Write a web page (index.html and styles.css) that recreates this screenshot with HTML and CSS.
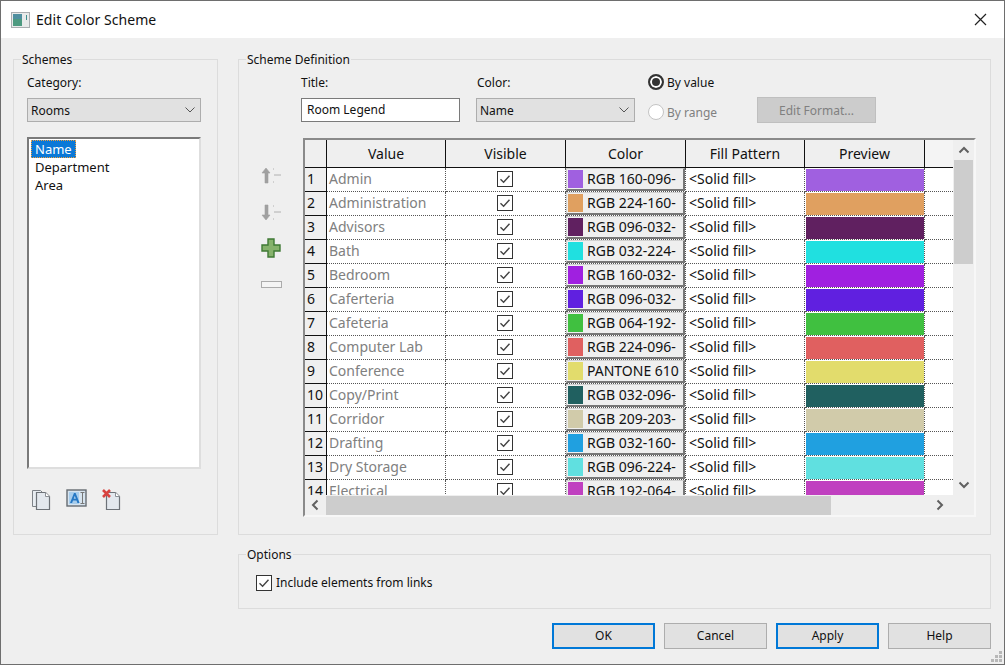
FILE: index.html
```html
<!DOCTYPE html>
<html lang="en">
<head>
<meta charset="utf-8">
<title>Edit Color Scheme</title>
<link rel="stylesheet" href="styles.css">
</head>
<body>
<svg class="defs" width="0" height="0" aria-hidden="true">
  <symbol id="check" viewBox="0 0 16 16">
    <rect x="0.5" y="0.5" width="15" height="15" fill="#fff" stroke="#333"/>
    <path d="M3.5 8.2 6.6 11.2 12.5 4.8" fill="none" stroke="#444" stroke-width="1.4"/>
  </symbol>
  <symbol id="chev" viewBox="0 0 12 12">
    <path d="M1.5 8.5 6 4 10.5 8.5" fill="none" stroke="#606060" stroke-width="2"/>
  </symbol>
</svg>
<div class="window">
  <header class="titlebar">
    <svg class="app-icon" width="19" height="16" viewBox="0 0 19 16">
      <rect x="0.5" y="0.5" width="18" height="15" fill="#e8eaea" stroke="#a9adb0"/>
      <rect x="2" y="2" width="9" height="12" fill="#4d9a80"/>
      <rect x="2" y="2" width="9" height="5" fill="#4f8fa0"/>
      <rect x="15" y="3" width="1" height="5" fill="#3f8f8f"/>
    </svg>
    <span class="title">Edit Color Scheme</span>
    <svg class="close" width="13" height="13" viewBox="0 0 13 13"><path d="M1 1 12 12M12 1 1 12" stroke="#222" stroke-width="1.2"/></svg>
  </header>
  <main class="content">
    <div class="top">
      <fieldset class="group schemes">
        <legend>Schemes</legend>
        <div class="label">Category:</div>
        <div class="combo">Rooms<svg class="combo-arrow" width="10" height="6" viewBox="0 0 10 6"><path d="M.5.5 5 5 9.5.5" fill="none" stroke="#555"/></svg></div>
        <ul class="list">
          <li class="selected"><span>Name</span></li>
          <li><span>Department</span></li>
          <li><span>Area</span></li>
        </ul>
        <div class="tools">
          <svg width="22" height="22" viewBox="0 0 22 22">
            <path d="M1.5 1.5h8l3 3v13h-11z" fill="#e8edf2" stroke="#7d8288"/>
            <path d="M5.5 3.5h9l4 4v13h-13z" fill="#e3e8ee" stroke="#6d7278" stroke-width="1.2"/>
            <path d="M14.5 3.5v4h4" fill="#fff" stroke="#8a8f95"/>
          </svg>
          <svg width="22" height="19" viewBox="0 0 22 19">
            <rect x="1" y="1" width="19" height="16" fill="#d7e4ef" stroke="#666c72" stroke-width="1.4"/>
            <rect x="3" y="3" width="10" height="12" fill="#a8cdec"/>
            <path d="M4 14 8 4h1.6l4 10h-2.2l-.9-2.5H7L6.100 14zM7.700 9.800h2.200L8.800 6.800z" fill="#2678c4"/>
            <path d="M14.500 3.500h4M16.500 3.500v11M14.500 14.500h4" fill="none" stroke="#777" stroke-width="1"/>
          </svg>
          <svg width="23" height="22" viewBox="0 0 23 22">
            <path d="M5.500 3.500h9l4 4v13h-13z" fill="#e3e8ee" stroke="#6d7278" stroke-width="1.200"/>
            <path d="M14.500 3.500v4h4" fill="#fff" stroke="#8a8f95"/>
            <path d="M2 1 9 8M9 1 2 8" stroke="#d8433f" stroke-width="2.600"/>
          </svg>
        </div>
      </fieldset>
      <fieldset class="group definition">
        <legend>Scheme Definition</legend>
        <div class="def-head">
          <div class="field field-title">
            <div class="label">Title:</div>
            <div class="input">Room Legend</div>
          </div>
          <div class="field field-color">
            <div class="label">Color:</div>
            <div class="combo">Name<svg class="combo-arrow" width="10" height="6" viewBox="0 0 10 6"><path d="M.5.5 5 5 9.500.5" fill="none" stroke="#555"/></svg></div>
          </div>
          <div class="radios">
            <div class="radio on"><i></i>By value</div>
            <div class="radio off"><i></i>By range</div>
          </div>
          <div class="btn-disabled">Edit Format...</div>
        </div>
        <div class="def-body">
          <div class="side">
            <svg class="s-up" width="22" height="17" viewBox="0 0 22 17">
              <path d="M5 1 9 6H7V16H4V6H1z" fill="#a0a0a0" stroke="#a0a0a0" stroke-width=".6"/>
              <path d="M12 2h1M12 15h1M13 8h7" stroke="#b0b0b0"/>
            </svg>
            <svg class="s-down" width="22" height="17" viewBox="0 0 22 17">
              <path d="M5 16 9 11H7V1H4V11H1z" fill="#a0a0a0" stroke="#a0a0a0" stroke-width=".6"/>
              <path d="M12 2h1M12 15h1M13 8h7" stroke="#b0b0b0"/>
            </svg>
            <svg class="s-plus" width="20" height="20" viewBox="0 0 20 20">
              <path d="M7 1h6v6h6v6h-6v6H7v-6H1V7h6z" fill="#86b26c" stroke="#3f7a34" stroke-width="1.400"/>
            </svg>
            <svg class="s-minus" width="21" height="7" viewBox="0 0 21 7"><rect x=".5" y=".5" width="20" height="6" fill="#f4f4f4" stroke="#ababab"/></svg>
          </div>
          <div class="grid">
            <div class="grid-view">
              <table>
                <colgroup>
                  <col class="c-num"><col class="c-val"><col class="c-vis"><col class="c-col"><col class="c-pat"><col class="c-pre"><col class="c-end">
                </colgroup>
                <thead>
                  <tr><th></th><th>Value</th><th>Visible</th><th>Color</th><th>Fill Pattern</th><th>Preview</th><th class="blank"></th></tr>
                </thead>
                <tbody>
                  <tr><th>1</th><td class="val">Admin</td><td class="vis"><svg><use href="#check"/></svg></td><td class="col"><div class="cbtn"><i class="f1"></i>RGB 160-096-</div></td><td class="pat">&lt;Solid fill&gt;</td><td class="pre"><div class="f1"></div></td><td class="end"></td></tr>
                  <tr><th>2</th><td class="val">Administration</td><td class="vis"><svg><use href="#check"/></svg></td><td class="col"><div class="cbtn"><i class="f2"></i>RGB 224-160-</div></td><td class="pat">&lt;Solid fill&gt;</td><td class="pre"><div class="f2"></div></td><td class="end"></td></tr>
                  <tr><th>3</th><td class="val">Advisors</td><td class="vis"><svg><use href="#check"/></svg></td><td class="col"><div class="cbtn"><i class="f3"></i>RGB 096-032-</div></td><td class="pat">&lt;Solid fill&gt;</td><td class="pre"><div class="f3"></div></td><td class="end"></td></tr>
                  <tr><th>4</th><td class="val">Bath</td><td class="vis"><svg><use href="#check"/></svg></td><td class="col"><div class="cbtn"><i class="f4"></i>RGB 032-224-</div></td><td class="pat">&lt;Solid fill&gt;</td><td class="pre"><div class="f4"></div></td><td class="end"></td></tr>
                  <tr><th>5</th><td class="val">Bedroom</td><td class="vis"><svg><use href="#check"/></svg></td><td class="col"><div class="cbtn"><i class="f5"></i>RGB 160-032-</div></td><td class="pat">&lt;Solid fill&gt;</td><td class="pre"><div class="f5"></div></td><td class="end"></td></tr>
                  <tr><th>6</th><td class="val">Caferteria</td><td class="vis"><svg><use href="#check"/></svg></td><td class="col"><div class="cbtn"><i class="f6"></i>RGB 096-032-</div></td><td class="pat">&lt;Solid fill&gt;</td><td class="pre"><div class="f6"></div></td><td class="end"></td></tr>
                  <tr><th>7</th><td class="val">Cafeteria</td><td class="vis"><svg><use href="#check"/></svg></td><td class="col"><div class="cbtn"><i class="f7"></i>RGB 064-192-</div></td><td class="pat">&lt;Solid fill&gt;</td><td class="pre"><div class="f7"></div></td><td class="end"></td></tr>
                  <tr><th>8</th><td class="val">Computer Lab</td><td class="vis"><svg><use href="#check"/></svg></td><td class="col"><div class="cbtn"><i class="f8"></i>RGB 224-096-</div></td><td class="pat">&lt;Solid fill&gt;</td><td class="pre"><div class="f8"></div></td><td class="end"></td></tr>
                  <tr><th>9</th><td class="val">Conference</td><td class="vis"><svg><use href="#check"/></svg></td><td class="col"><div class="cbtn"><i class="f9"></i>PANTONE 610</div></td><td class="pat">&lt;Solid fill&gt;</td><td class="pre"><div class="f9"></div></td><td class="end"></td></tr>
                  <tr><th>10</th><td class="val">Copy/Print</td><td class="vis"><svg><use href="#check"/></svg></td><td class="col"><div class="cbtn"><i class="f10"></i>RGB 032-096-</div></td><td class="pat">&lt;Solid fill&gt;</td><td class="pre"><div class="f10"></div></td><td class="end"></td></tr>
                  <tr><th>11</th><td class="val">Corridor</td><td class="vis"><svg><use href="#check"/></svg></td><td class="col"><div class="cbtn"><i class="f11"></i>RGB 209-203-</div></td><td class="pat">&lt;Solid fill&gt;</td><td class="pre"><div class="f11"></div></td><td class="end"></td></tr>
                  <tr><th>12</th><td class="val">Drafting</td><td class="vis"><svg><use href="#check"/></svg></td><td class="col"><div class="cbtn"><i class="f12"></i>RGB 032-160-</div></td><td class="pat">&lt;Solid fill&gt;</td><td class="pre"><div class="f12"></div></td><td class="end"></td></tr>
                  <tr><th>13</th><td class="val">Dry Storage</td><td class="vis"><svg><use href="#check"/></svg></td><td class="col"><div class="cbtn"><i class="f13"></i>RGB 096-224-</div></td><td class="pat">&lt;Solid fill&gt;</td><td class="pre"><div class="f13"></div></td><td class="end"></td></tr>
                  <tr><th>14</th><td class="val">Electrical</td><td class="vis"><svg><use href="#check"/></svg></td><td class="col"><div class="cbtn"><i class="f14"></i>RGB 192-064-</div></td><td class="pat">&lt;Solid fill&gt;</td><td class="pre"><div class="f14"></div></td><td class="end"></td></tr>
                </tbody>
              </table>
            </div>
            <div class="vbar">
              <svg class="arrow" width="12" height="12"><use href="#chev"/></svg>
              <div class="vtrack"><div class="vthumb"></div></div>
              <svg class="arrow flip" width="12" height="12"><use href="#chev"/></svg>
            </div>
            <div class="hbar">
              <svg class="arrow left" width="12" height="12"><use href="#chev"/></svg>
              <div class="htrack"><div class="hthumb"></div></div>
              <svg class="arrow right" width="12" height="12"><use href="#chev"/></svg>
            </div>
          </div>
        </div>
      </fieldset>
    </div>
    <fieldset class="group options">
      <legend>Options</legend>
      <div class="opt"><svg class="opt-check"><use href="#check"/></svg>Include elements from links</div>
    </fieldset>
    <div class="buttons">
      <div class="btn primary">OK</div>
      <div class="btn">Cancel</div>
      <div class="btn primary">Apply</div>
      <div class="btn">Help</div>
    </div>
  </main>
  <svg class="grip" width="12" height="12" viewBox="0 0 12 12"><path d="M8 0h3v3H8zM4 4h3v3H4zM8 4h3v3H8zM0 8h3v3H0zM4 8h3v3H4zM8 8h3v3H8z" fill="#b8b8b8"/></svg>
</div>
</body>
</html>
```
FILE: styles.css
```css
* { box-sizing: border-box; }
html, body { margin: 0; padding: 0; }
body { font-family: "Noto Sans", "Liberation Sans", sans-serif; font-size: 12px; color: #111; }
.defs { position: absolute; }
.window {
  position: relative;
  width: 1005px; height: 665px;
  background: #efefef;
  border: 1px solid #6e6e6e;
  display: flex; flex-direction: column;
  overflow: hidden;
}
.titlebar {
  height: 37px; flex: none; background: #fff;
  display: flex; align-items: center;
  padding: 0 17px 0 10px;
}
.app-icon { margin-right: 6px; }
.title { font-size: 14px; letter-spacing: .05px; }
.close { margin-left: auto; }
.content { flex: 1; display: flex; flex-direction: column; padding: 13px 13px 0 12px; }
.top { display: flex; gap: 20px; height: 484px; flex: none; }
.group { margin: 0; min-width: 0; border: 1px solid #dcdcdc; padding: 0; }
.group legend { margin-left: 7px; padding: 0 1px; font-size: 12px; line-height: 17px; height: 17px; }
.schemes { width: 205px; padding: 6px 16px 0 13px; margin-top: 0; }
.schemes legend { margin-left: -6px; }
.label { line-height: 17px; height: 17px; }
.combo {
  position: relative;
  height: 24px; margin-top: 7px;
  background: #e1e1e1; border: 1px solid #adadad;
  padding: 1px 0 0 3px; line-height: 22px;
}
.combo-arrow { position: absolute; right: 5px; top: 8px; }
.list {
  list-style: none; margin: 15px 0 0; padding: 1px 2px;
  height: 332px; background: #fff;
  border: 2px solid #dedede; border-top-color: #7a7a7a; border-left-color: #7a7a7a;
  font-size: 13px;
}
.list li { height: 18px; line-height: 18px; }
.list span { display: inline-block; padding: 0 4px; height: 18px; }
.list .selected span { background: #0a78d7; color: #fff; outline: 1px dotted #f0a040; outline-offset: -1px; }
.tools { display: flex; gap: 13px; margin-top: 20px; padding-left: 4px; align-items: flex-start; }
.definition { flex: 1; padding: 6px 14px 0 0; }
.def-head { display: flex; height: 64px; padding-left: 62px; }
.field-title { width: 175px; }
.field-title .input {
  width: 159px; height: 24px; margin-top: 7px;
  background: #fff; border: 1px solid #7a7a7a;
  padding-left: 5px; line-height: 22px;
}
.field-color { width: 172px; }
.field-color .label { padding-left: 1px; }
.field-color .combo { width: 159px; }
.radios { width: 109px; margin-top: -1px; display: flex; flex-direction: column; gap: 12px; }
.radio { display: flex; align-items: center; gap: 3px; height: 18px; }
.radio i { width: 16px; height: 16px; border-radius: 50%; background: #fff; flex: none; }
.radio.on i { border: 2px solid #333; box-shadow: inset 0 0 0 2px #fff; background: #333; }
.radio.off { color: #808080; }
.radio.off i { border: 1px solid #c4c4c4; }
.btn-disabled {
  width: 119px; height: 26px; margin-top: 23px;
  background: #cccccc; border: 1px solid #bfbfbf; color: #808080;
  text-align: center; line-height: 24px; padding-top: 1px;
}
.def-body { display: flex; margin-top: 0; }
.side { width: 64px; flex: none; padding-top: 29px; padding-left: 22px; display: flex; flex-direction: column; align-items: flex-start; }
.s-down { margin-top: 20px; }
.s-plus { margin-top: 17px; }
.s-minus { margin-top: 23px; }
.grid {
  width: 673px; height: 379px;
  border: 2px solid #f7f7f7; border-top-color: #8a8a8a; border-left-color: #8a8a8a;
  display: grid;
  grid-template-columns: 648px 21px;
  grid-template-rows: 355px 20px;
  background: #efefef;
}
.grid-view { overflow: hidden; background: #fff; }
table { border-collapse: separate; border-spacing: 0; table-layout: fixed; width: 648px; font-size: 14px; }
.c-num { width: 22px; } .c-val { width: 119px; } .c-vis { width: 120px; } .c-col { width: 120px; }
.c-pat { width: 119px; } .c-pre { width: 120px; } .c-end { width: 28px; }
thead th {
  height: 28px; padding: 0 0 1px; font-weight: 400; text-align: center;
  background: #efefef; border-right: 1px solid #111; border-bottom: 1px solid #111;
}
thead th.blank { border-right: 0; background: #f4f4f4; }
tbody th {
  height: 24px; padding: 0 0 2px 2px; font-weight: 400; text-align: left;
  background: #efefef; border-right: 1px solid #111; border-bottom: 1px solid #111;
}
tbody td { height: 24px; padding: 0; border-right: 1px dotted #555; border-bottom: 1px dotted #555; overflow: hidden; white-space: nowrap; }
tbody td.end { border-right: 0; }
.val { color: #808080; }
tbody td.val { padding: 0 0 2px 2px; }
tbody td.vis { text-align: center; line-height: 0; padding: 0 1px 2px 0; }
.vis svg { width: 16px; height: 16px; vertical-align: middle; }
.cbtn {
  height: 23px; display: flex; align-items: center;
  background: #efefef; border: 1px solid #d0d0d0; border-right: 2px solid #777; border-bottom: 2px solid #777;
  padding-left: 1px; overflow: hidden; line-height: 20px;
}
.cbtn i { width: 15px; height: 18px; flex: none; margin-right: 4px; }
tbody td.pat { padding: 0 0 2px 3px; }
.pre div { height: 22px; margin: 0 0 0 1px; }
.f1 { background: #a060e0; } .f2 { background: #e0a060; } .f3 { background: #602060; }
.f4 { background: #20e0e0; } .f5 { background: #a020e0; } .f6 { background: #6020e0; }
.f7 { background: #40c040; } .f8 { background: #e06060; } .f9 { background: #e2dc6c; }
.f10 { background: #206060; } .f11 { background: #d1cbaa; } .f12 { background: #20a0e0; }
.f13 { background: #60e0e0; } .f14 { background: #c040c0; }
.vbar { display: flex; flex-direction: column; align-items: center; background: #efefef; }
.vbar .arrow { margin: 4px 0; flex: none; }
.vtrack { flex: 1; width: 19px; }
.vthumb { height: 104px; background: #cdcdcd; }
.flip { transform: scaleY(-1); }
.hbar { grid-column: 1 / 3; display: flex; align-items: center; background: #efefef; }
.hbar .left { transform: rotate(-90deg); margin: 0 4px 0 4px; flex: none; }
.hbar .right { transform: rotate(90deg); margin: 0 28px 0 0; flex: none; }
.htrack { flex: 1; height: 19px; }
.hthumb { width: 505px; height: 19px; background: #cdcdcd; margin-left: 1px; }
.options { height: 63px; margin: 11px 0 0 225px; width: 753px; padding-left: 17px; }
.options legend { margin-left: -10px; }
.opt { display: flex; align-items: center; margin-top: 11px; }
.opt-check { width: 16px; height: 16px; margin-right: 4px; }
.buttons { display: flex; justify-content: flex-end; gap: 9px; margin-top: 14px; }
.btn { width: 103px; height: 26px; background: #e1e1e1; border: 1px solid #adadad; text-align: center; line-height: 24px; }
.btn.primary { border: 2px solid #0078d7; line-height: 22px; }
.grip { position: absolute; right: 1px; bottom: 1px; }
```
